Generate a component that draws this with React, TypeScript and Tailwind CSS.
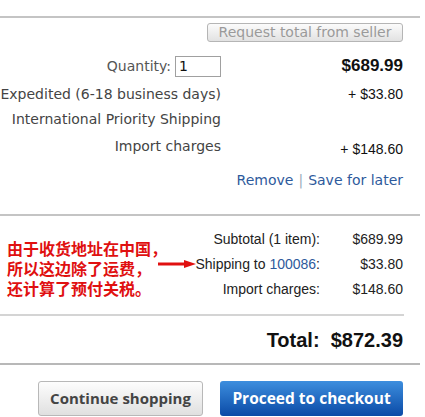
const verdana = { fontFamily: '"DejaVu Sans", Verdana, sans-serif' };
const arial = "font-['Liberation_Sans',Arial,sans-serif]";

export default function App() {
  return (
    <div className="relative h-[417px] w-[425px] overflow-hidden bg-white">
      <div className="mt-[16px] mr-[5px] border-t-2 border-[#c4c4c4]" />

      <div className="flex justify-end pr-[22px] pt-[5px]">
        <div
          className="flex h-[19px] w-[196px] items-center justify-center rounded-[3px] border border-[#b5b5b5] bg-gradient-to-b from-[#fbfbfb] to-[#e2e2e2] text-[14px] text-[#9a9a9a]"
          style={verdana}
        >
          Request total from seller
        </div>
      </div>

      <div className="mt-[13px] flex h-[22px] items-center">
        <div className="flex w-[221px] items-center justify-end gap-[4px] text-[14px] text-[#555]" style={verdana}>
          Quantity:
          <div className="flex h-[21px] w-[46px] items-center border border-[#a0a0a0] pl-[3px] text-[14px] text-[#111]">1</div>
        </div>
        <div className={`flex-1 pr-[22px] text-right ${arial} text-[17px] font-bold text-[#111]`}>$689.99</div>
      </div>

      <div className="mt-[7px] flex h-[20px] items-center leading-[20px]">
        <div className="w-[221px] text-right text-[14px] text-[#444]" style={verdana}>
          Expedited (6-18 business days)
        </div>
        <div className={`flex-1 pr-[22px] text-right ${arial} text-[14px] text-[#111]`}>+ $33.80</div>
      </div>

      <div className="mt-[5px] flex h-[20px] items-center leading-[20px]">
        <div className="w-[221px] text-right text-[14px] text-[#444]" style={verdana}>
          International Priority Shipping
        </div>
      </div>

      <div className="mt-[7px] flex h-[20px] items-start leading-[20px]">
        <div className="w-[221px] text-right text-[14px] text-[#444]" style={verdana}>
          Import charges
        </div>
        <div className={`flex-1 pr-[22px] pt-[3px] text-right ${arial} text-[14px] text-[#111]`}>+ $148.60</div>
      </div>

      <div className="mt-[14px] flex h-[20px] items-center justify-end pr-[22px] text-[14px] leading-[20px] text-[#2e5a9c]" style={verdana}>
        Remove <span className="mx-[5px] text-[#9ab]">|</span> Save for later
      </div>

      <div className="mt-[24px] mr-[5px] border-t-2 border-[#c4c4c4]" />

      <div className={`relative mt-[11px] ${arial} text-[14px] text-[#222]`}>
        <div className="flex h-[25px] items-center justify-end pr-[22px]">
          <span className="w-[130px] text-right">Subtotal (1 item):</span>
          <span className="w-[83px] text-right">$689.99</span>
        </div>
        <div className="flex h-[25px] items-center justify-end pr-[22px]">
          <span className="w-[130px] text-right">
            Shipping to <span className="text-[#2e5a9c]">100086</span>:
          </span>
          <span className="w-[83px] text-right">$33.80</span>
        </div>
        <div className="flex h-[25px] items-center justify-end pr-[22px]">
          <span className="w-[130px] text-right">Import charges:</span>
          <span className="w-[83px] text-right">$148.60</span>
        </div>

        {/* red annotation on the screenshot */}
        <div
          className="absolute left-[7px] top-[11px] text-[16px] font-bold leading-[20px] text-[#e01010]"
          style={{ fontFamily: '"Noto Sans CJK SC", sans-serif' }}
        >
          <div>由于收货地址在中国，</div>
          <div>所以这边除了运费，</div>
          <div>还计算了预付关税。</div>
        </div>
        <svg className="absolute left-[158px] top-[32px]" width="38" height="10" viewBox="0 0 38 10">
          <line x1="0" y1="5" x2="28" y2="5" stroke="#e01010" strokeWidth="3" />
          <polygon points="26,1 38,5 26,9" fill="#e01010" />
        </svg>
      </div>

      <div className="mt-[12px] mr-[21px] border-t-2 border-[#d4d4d4]" />

      <div className={`flex h-[47px] items-center justify-end pr-[22px] ${arial} text-[20px] font-bold text-[#111]`}>
        Total:&nbsp; $872.39
      </div>

      <div className="mr-[5px] border-t-2 border-[#b8b8b8]" />

      <div className="mt-[16px] flex justify-end gap-[17px] pr-[22px]" style={{ fontFamily: '"Open Sans", sans-serif' }}>
        <div className="flex h-[35px] w-[165px] items-center justify-center rounded-[3px] border border-[#b8b8b8] bg-gradient-to-b from-[#fdfdfd] to-[#e0e0e0] text-[15px] font-bold text-[#444]">
          Continue shopping
        </div>
        <div className="flex h-[35px] w-[183px] items-center justify-center rounded-[3px] bg-gradient-to-b from-[#3d8ede] to-[#0a4aa6] text-[15.5px] font-bold text-white">
          Proceed to checkout
        </div>
      </div>
    </div>
  );
}
